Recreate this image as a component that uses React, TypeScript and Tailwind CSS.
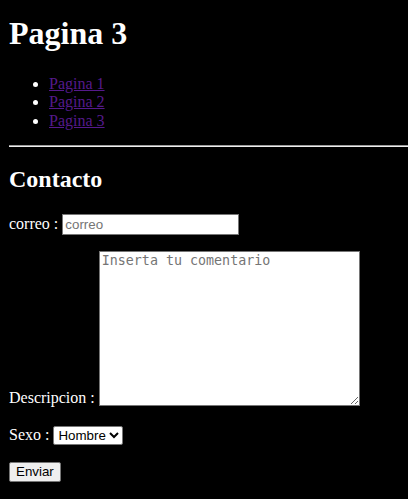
import React from 'react';

const links = ['Pagina 1', 'Pagina 2', 'Pagina 3'];

function App() {
  return (
    <div className="min-h-screen bg-black text-white pl-[9px] pr-2 pt-[15px] pb-4 font-['Liberation_Serif',serif] text-[16px] leading-[18.4px] overflow-hidden">
      <h1 className="text-[32px] leading-[37px] font-bold mb-[23px]">Pagina 3</h1>

      <ul className="list-disc pl-10 mb-[15px]">
        {links.map((l) => (
          <li key={l}>
            <a href="#" className="text-[#551a8b] underline">
              {l}
            </a>
          </li>
        ))}
      </ul>

      <hr className="-mr-2 h-[2px] border-0 border-t border-t-[#9a9a9a] border-b border-b-[#eeeeee] mb-[18px]" />

      <h2 className="text-[24px] leading-[28px] font-bold mb-[21px]">Contacto</h2>

      <form onSubmit={(e) => e.preventDefault()}>
        <p className="mb-4">
          correo :{' '}
          <input
            type="text"
            placeholder="correo"
            className="w-[177px] h-[21px] bg-white text-black border border-[#767676] px-[2px] py-[1px] text-[13.33px] font-['Liberation_Sans',Arial,sans-serif] placeholder:text-[#757575] align-baseline"
          />
        </p>

        <p className="mb-[18px]">
          Descripcion :{' '}
          <textarea
            placeholder="Inserta tu comentario"
            className="w-[261px] h-[155px] bg-white text-black border border-[#767676] px-[2px] py-[1px] text-[13.33px] leading-[15px] font-['DejaVu_Sans_Mono',monospace] placeholder:text-[#757575] align-text-bottom"
          />
        </p>

        <p className="mb-[17px]">
          Sexo :{' '}
          <select className="h-[19px] bg-white text-black border border-[#767676] rounded-[2px] text-[13.33px] font-['Liberation_Sans',Arial,sans-serif]">
            <option>Hombre</option>
            <option>Mujer</option>
          </select>
        </p>

        <button
          type="submit"
          className="h-[20px] px-[6px] bg-[#efefef] text-black border border-[#767676] rounded-[2px] text-[13.33px] leading-[15px] font-['Liberation_Sans',Arial,sans-serif]"
        >
          Enviar
        </button>
      </form>
    </div>
  );
}

export default App;
